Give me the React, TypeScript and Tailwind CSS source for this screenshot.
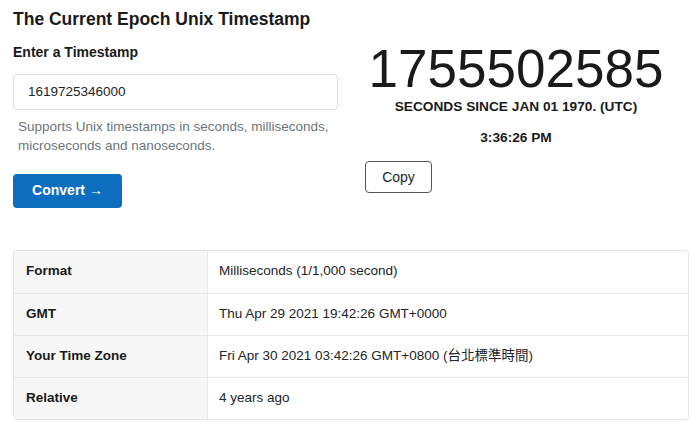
import React from 'react';

const rows: { label: string; value: string }[] = [
  { label: 'Format', value: 'Milliseconds (1/1,000 second)' },
  { label: 'GMT', value: 'Thu Apr 29 2021 19:42:26 GMT+0000' },
  { label: 'Your Time Zone', value: 'Fri Apr 30 2021 03:42:26 GMT+0800 (台北標準時間)' },
  { label: 'Relative', value: '4 years ago' },
];

export default function App() {
  return (
    <div
      className="w-[692px] h-[423px] overflow-hidden bg-white text-[#212529] px-[13px]"
      style={{ fontFamily: '"Liberation Sans", Arial, "Noto Sans CJK TC", sans-serif' }}
    >
      <div className="flex">
        <div className="w-[325px] shrink-0">
          <h1 className="text-[17.5px] font-bold leading-none pt-[11px] text-[#1a1a1a]">The Current Epoch Unix Timestamp</h1>
          <label className="block text-[14px] font-bold leading-none mt-[16px] text-[#1a1a1a]">Enter a Timestamp</label>
          <input
            defaultValue="1619725346000"
            className="mt-[15px] w-full h-[36px] rounded-[4px] border border-[#dedede] px-[14px] text-[13.5px] text-[#212529] outline-none"
          />
          <p className="mt-[7px] pl-[5px] text-[13.5px] leading-[19px] text-[#6c757d]">
            Supports Unix timestamps in seconds, milliseconds, microseconds and nanoseconds.
          </p>
          <button className="mt-[19px] h-[34px] w-[109px] rounded-[4px] bg-[#0d6ebf] text-white text-[14px] font-bold">
            Convert →
          </button>
        </div>
        <div className="ml-[27px] w-[302px] pt-[43px]">
          <div className="text-center text-[53px] leading-[52px] text-[#1a1a1a]">1755502585</div>
          <div className="text-center text-[13.7px] font-bold leading-none mt-[5px] text-[#1a1a1a]">SECONDS SINCE JAN 01 1970. (UTC)</div>
          <div className="text-center text-[13.7px] font-bold leading-none mt-[17px] text-[#1a1a1a]">3:36:26 PM</div>
          <button className="mt-[17px] h-[32px] w-[67px] rounded-[4px] border border-[#555] bg-white text-[14px] text-[#212529]">
            Copy
          </button>
        </div>
      </div>
      <div className="mt-[42px] w-[676px] rounded-[4px] border border-[#e4e4e4] overflow-hidden">
        {rows.map((r, i) => (
          <div key={r.label} className={`flex h-[42px] ${i > 0 ? 'border-t border-[#e8e8e8]' : ''}`}>
            <div className="w-[194px] shrink-0 bg-[#f7f7f7] border-r border-[#e8e8e8] flex items-center pl-[12px] text-[13.5px] font-bold text-[#1a1a1a]">
              {r.label}
            </div>
            <div className="flex items-center pl-[11px] text-[13.5px] text-[#212529]">{r.value}</div>
          </div>
        ))}
      </div>
    </div>
  );
}
